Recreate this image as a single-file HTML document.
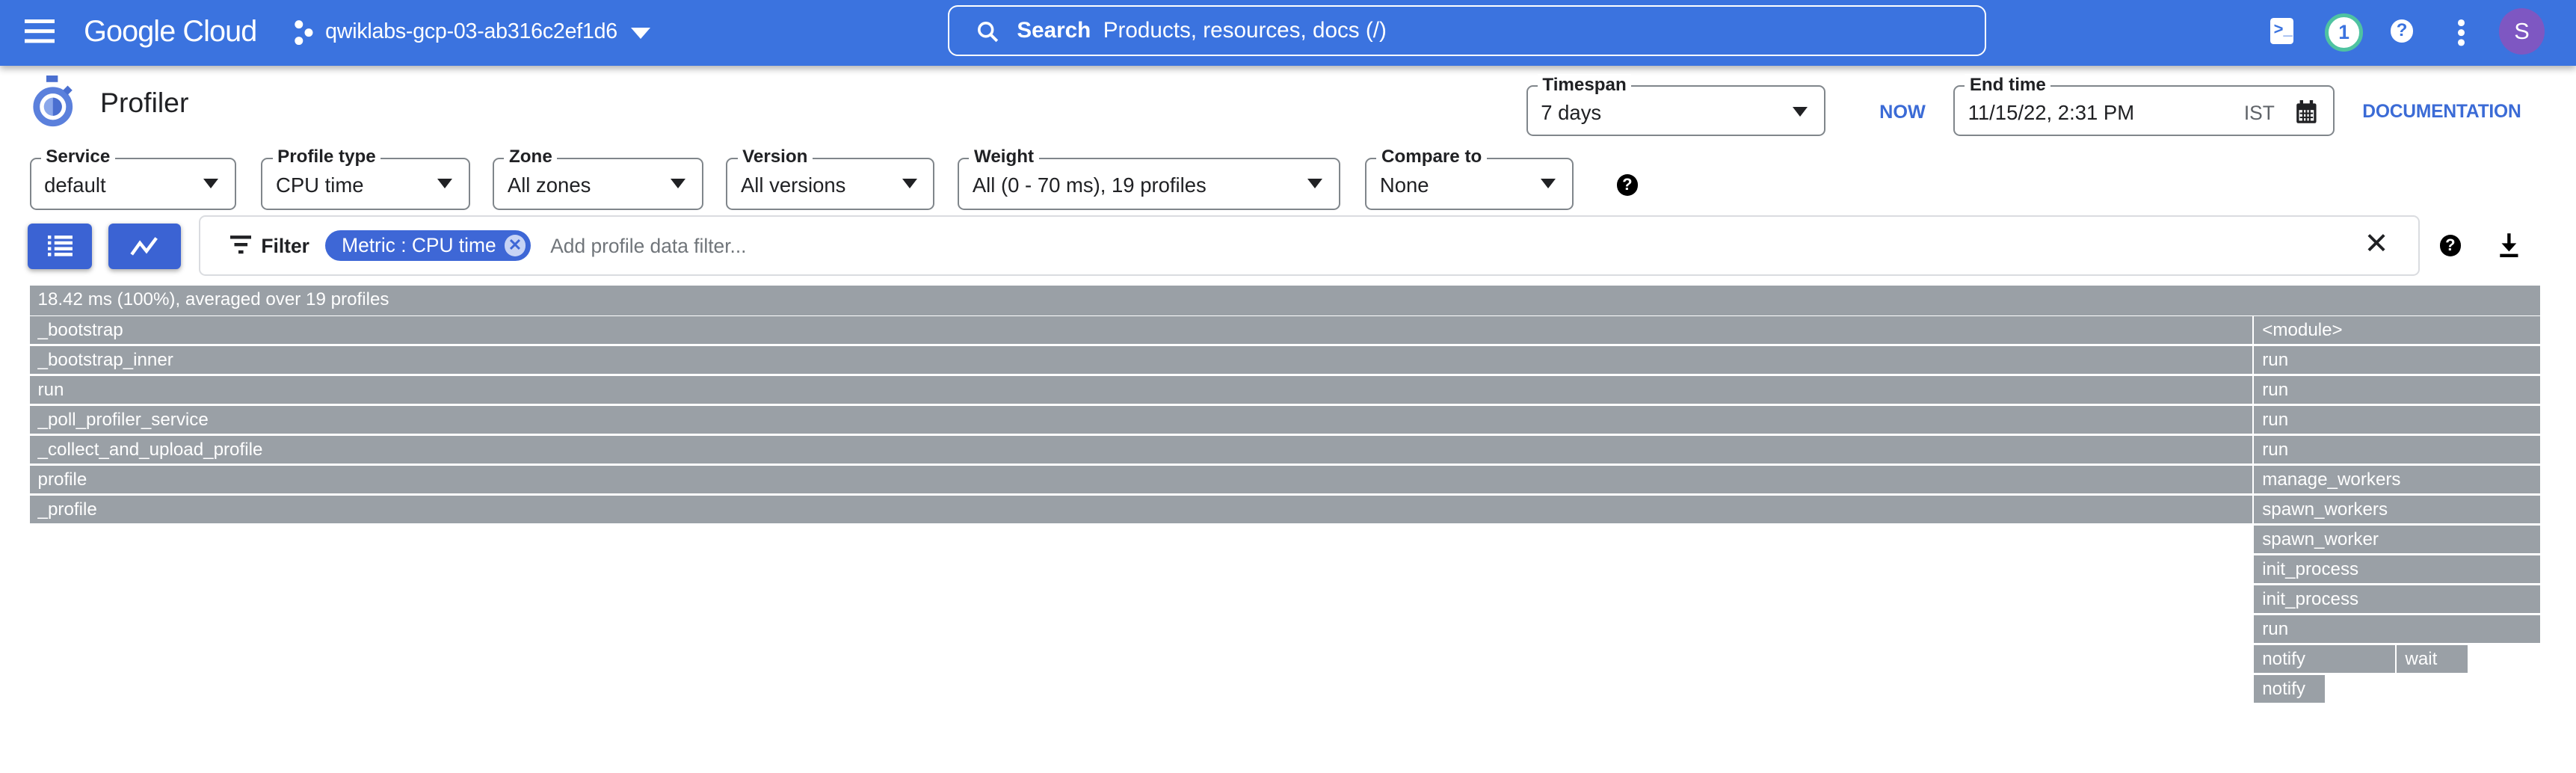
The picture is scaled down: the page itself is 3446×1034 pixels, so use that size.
<!DOCTYPE html>
<html><head><meta charset="utf-8">
<style>
html,body{margin:0;padding:0;width:3446px;height:1034px;overflow:hidden;background:#fff;}
#w{zoom:2.1977;width:1568px;height:470px;position:relative;font-family:"Liberation Sans",sans-serif;color:#202124;}
.a{position:absolute;}
.hdr{left:0;top:0;width:1568px;height:40px;background:#3b73df;box-shadow:0 2px 4px rgba(0,0,0,.3);}
.fld{position:absolute;border:1px solid #80868b;border-radius:4px;height:31px;box-sizing:border-box;}
.fld .l{position:absolute;top:-8px;left:6px;background:#fff;padding:0 3px;font-size:11px;font-weight:bold;color:#202124;line-height:14px;}
.fld .v{position:absolute;left:8px;top:9px;font-size:12.5px;line-height:14px;}
.fld .t{position:absolute;right:10px;top:12px;width:0;height:0;border-left:5px solid transparent;border-right:5px solid transparent;border-top:6px solid #202124;}
.fr{position:absolute;height:17px;background:#9aa0a6;color:#fff;font-size:11px;line-height:17px;padding-left:5px;box-sizing:border-box;white-space:nowrap;overflow:hidden;}
</style></head><body><div id="w">
<div class="a hdr">
 <div class="a" style="left:15px;top:12px;width:18px;height:2px;background:#fff;box-shadow:0 6px 0 #fff,0 12px 0 #fff"></div>
 <div class="a" style="left:51px;top:9px;color:#fff;font-size:18px;letter-spacing:-0.4px">Google Cloud</div>
 <svg class="a" style="left:178px;top:12px" width="14" height="16" viewBox="0 0 14 16"><circle cx="4" cy="3" r="2.5" fill="#fff"/><circle cx="10" cy="8" r="2.5" fill="#fff"/><circle cx="4" cy="13" r="2.5" fill="#fff"/></svg>
 <div class="a" style="left:198px;top:12px;color:#fff;font-size:13px;letter-spacing:-0.1px">qwiklabs-gcp-03-ab316c2ef1d6</div>
 <div class="a" style="left:384px;top:17px;border-left:6px solid transparent;border-right:6px solid transparent;border-top:7px solid #fff"></div>
 <div class="a" style="left:577px;top:3px;width:632px;height:31px;border:1px solid #fff;border-radius:6px;box-sizing:border-box"></div>
 <svg class="a" style="left:594px;top:12px" width="15" height="15" viewBox="0 0 24 24"><circle cx="10" cy="10" r="6.5" stroke="#fff" stroke-width="2.6" fill="none"/><path d="M15 15l6 6" stroke="#fff" stroke-width="2.8"/></svg>
 <div class="a" style="left:619px;top:11px;color:#fff;font-size:13.5px"><b>Search</b>&nbsp;&nbsp;Products, resources, docs (/)</div>
 <div class="a" style="left:1382px;top:11px;width:14px;height:16px;background:#fff;border-radius:2px"><span style="position:absolute;left:2px;top:1px;color:#3b73df;font-size:10px;font-weight:bold">&gt;_</span></div>
 <div class="a" style="left:1415px;top:8px;width:19px;height:19px;border:2.5px solid #4fc3a1;border-radius:50%;background:#fff;color:#3b73df;font-size:12px;font-weight:bold;text-align:center;line-height:19px">1</div>
 <div class="a" style="left:1455px;top:12px;width:14px;height:14px;border-radius:50%;background:#fff;color:#3b73df;font-size:11px;font-weight:bold;text-align:center;line-height:14px">?</div>
 <div class="a" style="left:1496px;top:12px;width:4px;height:4px;border-radius:50%;background:#fff;box-shadow:0 6px 0 #fff,0 12px 0 #fff"></div>
 <div class="a" style="left:1521px;top:5px;width:28px;height:28px;border-radius:50%;background:#7e57c2;color:#fff;font-size:14px;text-align:center;line-height:28px">S</div>
</div>

<svg class="a" style="left:18px;top:46px" width="28" height="32" viewBox="0 0 28 32"><rect x="10" y="0" width="7" height="4" fill="#4a6fd0"/><circle cx="14" cy="19" r="10" fill="none" stroke="#5b80dc" stroke-width="4"/><circle cx="14" cy="19" r="5.5" fill="#8aa7ea"/><path d="M14 13.5a5.5 5.5 0 0 1 0 11z" fill="#4a6fd0"/><rect x="21" y="7" width="4" height="4" fill="#4a6fd0" transform="rotate(45 23 9)"/></svg>
<div class="a" style="left:61px;top:53px;font-size:17px">Profiler</div>

<div class="fld" style="left:929px;top:52px;width:182px"><span class="l">Timespan</span><span class="v">7 days</span><span class="t"></span></div>
<div class="a" style="left:1144px;top:62px;color:#3b6bd6;font-size:11.5px;font-weight:bold">NOW</div>
<div class="fld" style="left:1189px;top:52px;width:232px"><span class="l">End time</span><span class="v">11/15/22, 2:31 PM</span><span class="a" style="left:176px;top:9px;font-size:12px;color:#5f6368">IST</span>
<svg class="a" style="left:207px;top:8px" width="14" height="15" viewBox="0 0 14 15"><rect x="1" y="2" width="12" height="12" rx="1" fill="#202124"/><rect x="3" y="0" width="2" height="3" fill="#202124"/><rect x="9" y="0" width="2" height="3" fill="#202124"/><rect x="2.5" y="6" width="9" height="6.5" fill="#fff"/><path d="M3 8h8M3 10.5h8M5 6v7M7 6v7M9 6v7" stroke="#202124" stroke-width="1"/></svg></div>
<div class="a" style="left:1438px;top:62px;color:#3b6bd6;font-size:11.2px;font-weight:bold;letter-spacing:-0.1px">DOCUMENTATION</div>

<div class="fld" style="left:18px;top:96px;width:126px;height:32px"><span class="l">Service</span><span class="v">default</span><span class="t"></span></div>
<div class="fld" style="left:159px;top:96px;width:127px;height:32px"><span class="l">Profile type</span><span class="v">CPU time</span><span class="t"></span></div>
<div class="fld" style="left:300px;top:96px;width:128px;height:32px"><span class="l">Zone</span><span class="v">All zones</span><span class="t"></span></div>
<div class="fld" style="left:442px;top:96px;width:127px;height:32px"><span class="l">Version</span><span class="v">All versions</span><span class="t"></span></div>
<div class="fld" style="left:583px;top:96px;width:233px;height:32px"><span class="l">Weight</span><span class="v">All (0 - 70 ms), 19 profiles</span><span class="t"></span></div>
<div class="fld" style="left:831px;top:96px;width:127px;height:32px"><span class="l">Compare to</span><span class="v">None</span><span class="t"></span></div>
<div class="a" style="left:984px;top:106px;width:13px;height:13px;border-radius:50%;background:#000;color:#fff;font-size:10px;font-weight:bold;text-align:center;line-height:13px">?</div>

<div class="a" style="left:17px;top:136px;width:39px;height:28px;background:#3b63d3;border-radius:3px;box-shadow:0 1px 3px rgba(0,0,0,.35)">
 <svg class="a" style="left:12px;top:7px" width="15" height="14" viewBox="0 0 15 14"><path d="M0 1.5h2M4 1.5h11M0 5h2M4 5h11M0 8.5h2M4 8.5h11M0 12h2M4 12h11" stroke="#fff" stroke-width="2"/></svg></div>
<div class="a" style="left:66px;top:136px;width:44px;height:28px;background:#3b63d3;border-radius:3px;box-shadow:0 1px 3px rgba(0,0,0,.35)">
 <svg class="a" style="left:13px;top:7px" width="18" height="14" viewBox="0 0 18 14"><path d="M1 12l5-7 4 5 6-8" stroke="#fff" stroke-width="2" fill="none"/></svg></div>
<div class="a" style="left:121px;top:131px;width:1352px;height:37px;border:1px solid #dadce0;border-radius:4px;box-sizing:border-box"></div>
<svg class="a" style="left:140px;top:143px" width="13" height="12" viewBox="0 0 13 12"><path d="M0 1.5h13M2.5 6h8M5 10.5h3" stroke="#202124" stroke-width="2"/></svg>
<div class="a" style="left:159px;top:143px;font-size:12px;font-weight:bold">Filter</div>
<div class="a" style="left:198px;top:140px;width:125px;height:19px;background:#3e67d6;border-radius:10px;color:#fff;font-size:12px;line-height:19px"><span style="padding-left:10px">Metric : CPU time</span><span class="a" style="right:3px;top:3px;width:13px;height:13px;border-radius:50%;background:#c7d3f5;color:#3e67d6;font-size:10px;font-weight:bold;line-height:13px;text-align:center">✕</span></div>
<div class="a" style="left:335px;top:143px;font-size:12px;color:#70757a">Add profile data filter...</div>
<div class="a" style="left:1439px;top:139px;font-size:18px;line-height:20px;color:#202124">✕</div>
<div class="a" style="left:1485px;top:143px;width:13px;height:13px;border-radius:50%;background:#000;color:#fff;font-size:10px;font-weight:bold;text-align:center;line-height:13px">?</div>
<svg class="a" style="left:1520px;top:141px" width="14" height="16" viewBox="0 0 14 16"><path d="M7 1v9" stroke="#000" stroke-width="2"/><path d="M2.5 7l4.5 5 4.5-5z" fill="#000"/><rect x="1.5" y="13.5" width="11" height="2" fill="#000"/></svg>

<div class="fr" style="left:18px;top:174px;width:1528px;height:18px">18.42 ms (100%), averaged over 19 profiles</div>
<div class="fr" style="left:18px;top:192.5px;width:1353px">_bootstrap</div>
<div class="fr" style="left:18px;top:210.7px;width:1353px">_bootstrap_inner</div>
<div class="fr" style="left:18px;top:228.9px;width:1353px">run</div>
<div class="fr" style="left:18px;top:247.1px;width:1353px">_poll_profiler_service</div>
<div class="fr" style="left:18px;top:265.3px;width:1353px">_collect_and_upload_profile</div>
<div class="fr" style="left:18px;top:283.5px;width:1353px">profile</div>
<div class="fr" style="left:18px;top:301.7px;width:1353px">_profile</div>
<div class="fr" style="left:1372px;top:192.5px;width:174px">&lt;module&gt;</div>
<div class="fr" style="left:1372px;top:210.7px;width:174px">run</div>
<div class="fr" style="left:1372px;top:228.9px;width:174px">run</div>
<div class="fr" style="left:1372px;top:247.1px;width:174px">run</div>
<div class="fr" style="left:1372px;top:265.3px;width:174px">run</div>
<div class="fr" style="left:1372px;top:283.5px;width:174px">manage_workers</div>
<div class="fr" style="left:1372px;top:301.7px;width:174px">spawn_workers</div>
<div class="fr" style="left:1372px;top:319.9px;width:174px">spawn_worker</div>
<div class="fr" style="left:1372px;top:338.1px;width:174px">init_process</div>
<div class="fr" style="left:1372px;top:356.3px;width:174px">init_process</div>
<div class="fr" style="left:1372px;top:374.5px;width:174px">run</div>
<div class="fr" style="left:1372px;top:392.7px;width:86px">notify</div>
<div class="fr" style="left:1459px;top:392.7px;width:43px">wait</div>
<div class="fr" style="left:1372px;top:410.9px;width:43px">notify</div>
</div></body></html>
